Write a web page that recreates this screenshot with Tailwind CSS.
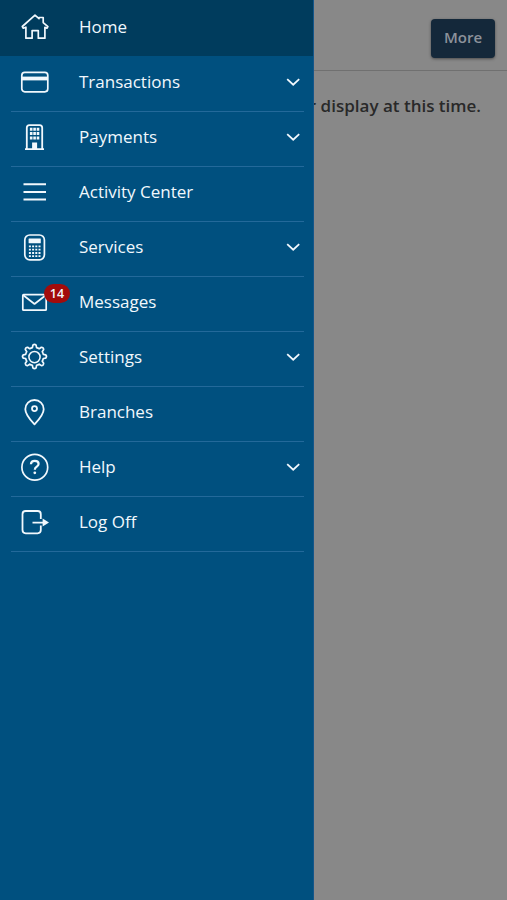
<!DOCTYPE html>
<html lang="en">
<head>
<meta charset="utf-8">
<title>Menu</title>
<script src="https://cdn.jsdelivr.net/npm/@tailwindcss/browser@4"></script>
</head>
<body class="relative h-[900px] w-[507px] overflow-hidden bg-[#888888] font-['Open_Sans',sans-serif]">
<main>
  <header class="flex h-[71px] items-start justify-end border-b border-[#707070] pt-[19px] pr-3">
    <button class="h-[39px] w-16 rounded-[4px] bg-[#14283a] pb-0.5 text-[15px] font-semibold text-[#8c929a] shadow-[0_1px_3px_rgba(0,0,0,0.45)]">More</button>
  </header>
  <p class="pt-[23px] pr-[26px] text-right text-[17px] leading-6 font-semibold whitespace-nowrap text-[#292929]">There are no accounts available for display at this time.</p>
</main>
<nav class="absolute top-0 left-0 h-[900px] w-[314px] border-r border-[#14568a] bg-[#00507f] text-[17px] font-normal text-[#f1f8fd] [&_svg]:shrink-0">
  <a class="flex h-14 items-center bg-[#003c5d] pb-px pl-[18px]">
    <svg class="h-[33px] w-[33px]" viewBox="0 0 33 33" fill="none" stroke="currentColor" stroke-width="1.7" stroke-linejoin="round"><path d="M5.3 17.2 4.3 15.5 17 4.2l4 3.5V6.5h4.2v5.1l4.7 4-1 1.6-2-.8v10.8h-6.6v-7.6h-6.2v7.6H7.9V16.2Z"/></svg>
    <span class="mb-0.5 ml-7">Home</span>
  </a>
  <ul class="mr-[9px] ml-[11px] mt-px [&>li]:flex [&>li]:h-[55px] [&>li]:items-center [&>li]:border-b [&>li]:border-[#23699a] [&>li]:pb-[3px] [&>li]:pl-[7px]">
    <li>
      <svg class="h-[33px] w-[33px]" viewBox="0 0 33 33" fill="none" stroke="currentColor" stroke-width="1.7"><rect x="3.8" y="6.4" width="26" height="19.4" rx="3"/><path d="M4 12.5h26" stroke-width="3.8"/></svg>
      <span class="mb-0.5 ml-7">Transactions</span>
      <svg class="mr-[3px] mb-px ml-auto h-4 w-4" viewBox="0 0 16 16" fill="none" stroke="currentColor" stroke-width="1.8"><path d="m2.2 5.2 6 5.5 6-5.5"/></svg>
    </li>
    <li>
      <svg class="h-[33px] w-[33px]" viewBox="0 0 33 33" fill="none" stroke="currentColor" stroke-width="1.8"><path d="M7 28.2h19M8.8 28V6.8q0-2.6 2.6-2.6h10.2q2.6 0 2.6 2.6V28"/><path d="M11.9 6.8h2.6v3h-2.6Zm3.4 0h2.6v3h-2.6Zm3.4 0h2.6v3h-2.6Zm-6.8 4.3h2.6v3h-2.6Zm3.4 0h2.6v3h-2.6Zm3.4 0h2.6v3h-2.6Zm-6.8 4.3h2.6v3h-2.6Zm3.4 0h2.6v3h-2.6Zm3.4 0h2.6v3h-2.6ZM14.1 21.5h5V28h-5Z" fill="currentColor" stroke="none"/></svg>
      <span class="mb-0.5 ml-7">Payments</span>
      <svg class="mr-[3px] mb-px ml-auto h-4 w-4" viewBox="0 0 16 16" fill="none" stroke="currentColor" stroke-width="1.8"><path d="m2.2 5.2 6 5.5 6-5.5"/></svg>
    </li>
    <li>
      <svg class="h-[33px] w-[33px]" viewBox="0 0 33 33" fill="none" stroke="currentColor" stroke-width="2"><path d="M5.5 8.3h22.5M5.5 15.9h22.5M5.5 23.6h22.5"/></svg>
      <span class="mb-0.5 ml-7">Activity Center</span>
    </li>
    <li>
      <svg class="h-[33px] w-[33px]" viewBox="0 0 33 33" fill="none" stroke="currentColor" stroke-width="1.7"><rect x="6.8" y="4" width="19.6" height="24.8" rx="5"/><rect x="10.6" y="7.4" width="12.2" height="4.8" rx=".5" fill="currentColor" stroke="none"/><path d="M10.9 15.4h12M10.9 18.7h12M10.9 22h12M10.9 25.2h12" stroke-width="1.8" stroke-dasharray="2 1.2"/></svg>
      <span class="mb-0.5 ml-7">Services</span>
      <svg class="mr-[3px] mb-px ml-auto h-4 w-4" viewBox="0 0 16 16" fill="none" stroke="currentColor" stroke-width="1.8"><path d="m2.2 5.2 6 5.5 6-5.5"/></svg>
    </li>
    <li>
      <span class="relative">
        <svg class="h-[33px] w-[33px]" viewBox="0 0 33 33" fill="none" stroke="currentColor" stroke-width="1.7" stroke-linejoin="round"><rect x="4.8" y="8.6" width="23.4" height="15.6" rx=".8"/><path d="m5 9 11.5 9L28 9"/></svg>
        <span class="absolute -top-[2px] left-[26px] flex h-[19px] w-[26px] items-center justify-center rounded-full bg-[#a20b0b] pt-px text-[12.5px] font-semibold">14</span>
      </span>
      <span class="mb-0.5 ml-7">Messages</span>
    </li>
    <li>
      <svg class="h-[33px] w-[33px]" viewBox="0 0 33 33" fill="none" stroke="currentColor" stroke-width="1.55" stroke-linejoin="round"><path transform="translate(-1.5 -1) scale(1.09)" d="M14.6 7 15 4.8q1.5-1.4 3 0l.4 2.2q1.4.3 2.5 1l1.9-1.3q2-.1 2.1 2.1l-1.3 1.9q.7 1.1 1 2.5l2.2.4q1.4 1.5 0 3l-2.2.4q-.3 1.4-1 2.5l1.3 1.9q-.1 2.2-2.1 2.1l-1.9-1.3q-1.1.7-2.5 1l-.4 2.4q-1.5 1.4-3 0l-.4-2.4q-1.4-.3-2.5-1l-1.9 1.3q-2 .1-2.1-2.1l1.3-1.9q-.7-1.1-1-2.5l-2.2-.4q-1.4-1.5 0-3l2.2-.4q.3-1.4 1-2.5L8.1 8.8q.1-2.2 2.1-2.1L12.1 8q1.1-.7 2.5-1Z"/><circle cx="16.5" cy="16.1" r="5.6"/></svg>
      <span class="mb-0.5 ml-7">Settings</span>
      <svg class="mr-[3px] mb-px ml-auto h-4 w-4" viewBox="0 0 16 16" fill="none" stroke="currentColor" stroke-width="1.8"><path d="m2.2 5.2 6 5.5 6-5.5"/></svg>
    </li>
    <li>
      <svg class="h-[33px] w-[33px]" viewBox="0 0 33 33" fill="none" stroke="currentColor" stroke-width="1.8" stroke-linejoin="round"><path d="M16.5 28.4Q7.3 18.6 7.3 13.2a9.2 9.2 0 0 1 18.4 0Q25.7 18.6 16.5 28.4Z"/><circle cx="16.5" cy="12.6" r="2.5"/></svg>
      <span class="mb-0.5 ml-7">Branches</span>
    </li>
    <li>
      <svg class="h-[33px] w-[33px]" viewBox="0 0 33 33" fill="none" stroke="currentColor" stroke-width="1.7"><circle cx="16.8" cy="16.2" r="12.9"/><path d="M12.9 13.2q.2-3.3 3.9-3.3 3.8 0 3.8 3.1 0 1.4-1.8 2.6-2 1.3-2 3.1" stroke-width="2.2"/><circle cx="16.8" cy="21.8" r="1.4" fill="currentColor" stroke="none"/></svg>
      <span class="mb-0.5 ml-7">Help</span>
      <svg class="mr-[3px] mb-px ml-auto h-4 w-4" viewBox="0 0 16 16" fill="none" stroke="currentColor" stroke-width="1.8"><path d="m2.2 5.2 6 5.5 6-5.5"/></svg>
    </li>
    <li>
      <svg class="h-[33px] w-[33px]" viewBox="0 0 33 33" fill="none" stroke="currentColor" stroke-width="1.8"><path d="M22.8 13V8.2q0-3.2-3.2-3.2H7.7Q4.5 5 4.5 8.2v15.9q0 3.2 3.2 3.2h11.9q3.2 0 3.2-3.2v-4.6M14.5 16.6h11"/><path d="m24.6 12.6 6.4 4-6.4 4Z" fill="currentColor" stroke="none"/></svg>
      <span class="mb-0.5 ml-7">Log Off</span>
    </li>
  </ul>
</nav>
</body>
</html>
